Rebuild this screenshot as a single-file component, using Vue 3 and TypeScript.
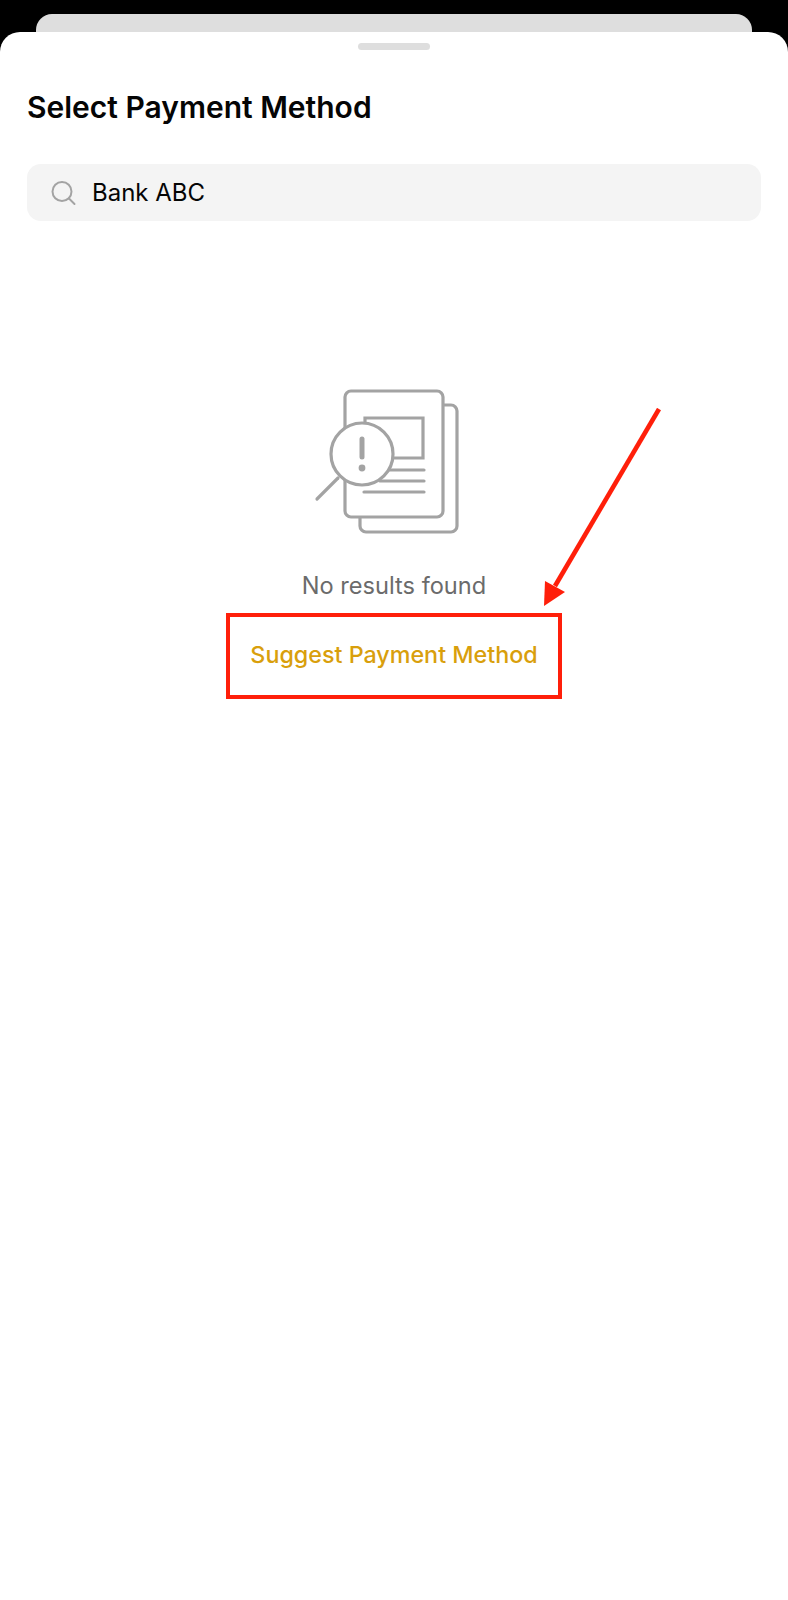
<template>
  <div class="page">
    <div class="back-sheet"></div>
    <div class="sheet">
      <div class="handle"></div>
      <h2 class="title">Select Payment Method</h2>

      <div class="search">
        <svg class="search-icon" width="26" height="26" viewBox="0 0 26 26" fill="none">
          <circle cx="11" cy="11.5" r="9.5" stroke="#a3a3a3" stroke-width="2" />
          <path d="M18 18.5 L23.5 24" stroke="#a3a3a3" stroke-width="2" stroke-linecap="round" />
        </svg>
        <span class="query">{{ query }}</span>
      </div>

      <div class="empty">
        <svg class="empty-icon" width="160" height="152" viewBox="0 0 160 152" fill="none" stroke="#a3a3a3" stroke-width="3.2">
          <path d="M129 16 H137 a6 6 0 0 1 6 6 V137 a6 6 0 0 1 -6 6 H52 a6 6 0 0 1 -6 -6 V128" />
          <rect x="31" y="2" width="98" height="126" rx="6" />
          <path d="M51 40 V29 H109 V69 H76" />
          <path d="M72 81 H110 M66 92 H110 M50 103 H110" stroke-linecap="round" />
          <circle cx="48" cy="65" r="31" fill="#fff" />
          <path d="M48 50 V68" stroke-width="5" stroke-linecap="round" />
          <circle cx="48" cy="79" r="3.4" fill="#a3a3a3" stroke="none" />
          <path d="M24 89 L3 110" stroke-linecap="round" />
        </svg>
        <p class="empty-text">No results found</p>
        <button class="suggest">Suggest Payment Method</button>
      </div>

      <svg class="arrow" width="130" height="210" viewBox="0 0 130 210" fill="none">
        <path d="M119 1 L15 178" stroke="#ff1f0a" stroke-width="4.6" />
        <path d="M4 198 L5 173 L25 184 Z" fill="#ff1f0a" />
      </svg>
    </div>
  </div>
</template>

<script setup lang="ts">
import { ref } from 'vue'

const query = ref('Bank ABC')
</script>

<style>
html,
body {
  background: #000;
}
</style>

<style scoped>
.page {
  width: 788px;
  height: 1600px;
  padding-top: 14px;
  box-sizing: border-box;
  background: #000;
  display: flex;
  flex-direction: column;
  font-family: 'Inter', 'Liberation Sans', sans-serif;
  overflow: hidden;
}

.back-sheet {
  height: 18px;
  margin: 0 36px;
  flex-shrink: 0;
  background: #dedede;
  border-radius: 16px 16px 0 0;
}

.sheet {
  position: relative;
  flex: 1;
  background: #fff;
  border-radius: 20px 20px 0 0;
  padding: 11px 27px 0;
}

.handle {
  width: 72px;
  height: 7px;
  margin: 0 auto;
  background: #dedede;
  border-radius: 4px;
}

.title {
  margin: 39px 0 0;
  font-size: 30px;
  line-height: 36px;
  font-weight: 600;
  color: #050505;
}

.search {
  display: flex;
  align-items: center;
  gap: 15px;
  height: 57px;
  margin-top: 39px;
  padding-left: 24px;
  background: #f4f4f4;
  border-radius: 14px;
}

.query {
  font-size: 24px;
  color: #050505;
}

.empty {
  display: flex;
  flex-direction: column;
  align-items: center;
  margin-top: 168px;
}

.empty-text {
  margin: 30px 0 0;
  font-size: 23.6px;
  line-height: 30px;
  color: #6b6b6b;
}

.suggest {
  width: 336px;
  height: 86px;
  margin-top: 12px;
  padding: 0 0 4px;
  background: #fff;
  border: 4px solid #ff1f0a;
  font-family: inherit;
  font-size: 23.3px;
  font-weight: 500;
  color: #d99f0c;
}

.arrow {
  position: absolute;
  left: 540px;
  top: 376px;
}
</style>
